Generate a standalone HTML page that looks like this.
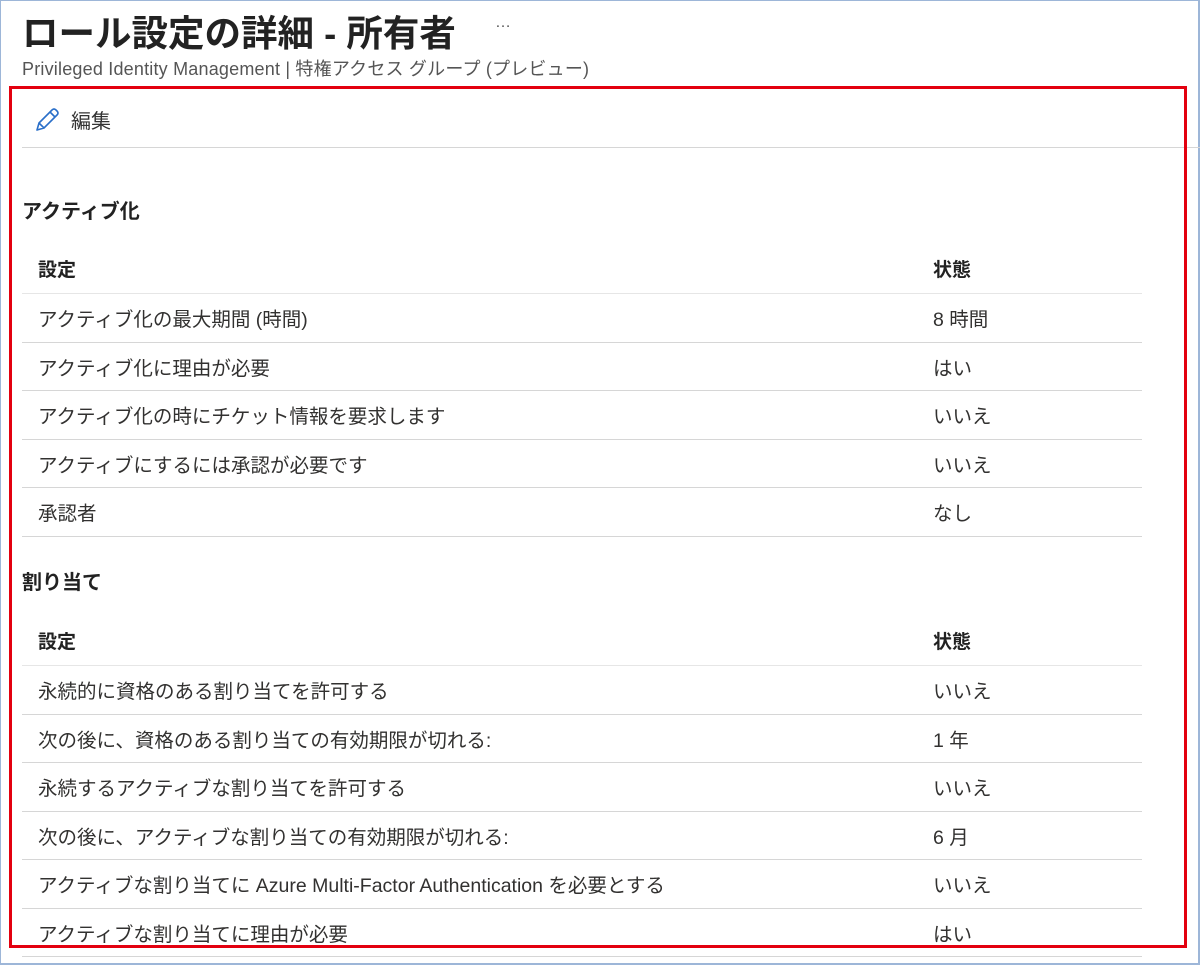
<!DOCTYPE html><html><head><meta charset="utf-8"><style>
body{margin:0;width:1200px;height:966px;background:#fff;font-family:"Liberation Sans","Noto Sans CJK JP",sans-serif;color:#323130;position:relative;overflow:hidden}
.frame{position:absolute;left:0;top:0;width:1197px;height:962px;border:1px solid #9db6d8;border-right-width:2px;border-bottom-width:2px}
.t{position:absolute;white-space:nowrap}
.line{position:absolute;height:1px;background:#d6d6d6}
.red{position:absolute;left:9px;top:86px;width:1172px;height:856px;border:3px solid #e3000f}
</style></head><body>
<div class="frame"></div>
<div class="t" style="left:22px;top:4px;font-size:36.5px;font-weight:bold;color:#222">ロール設定の詳細 - 所有者</div>
<div class="t" style="left:495px;top:14px;font-size:16px;color:#555">…</div>
<div class="t" style="left:22px;top:55px;font-size:18px;color:#555;letter-spacing:0.2px">Privileged Identity Management | 特権アクセス グループ (プレビュー)</div>
<svg class="t" style="left:33px;top:106px" width="28" height="28" viewBox="0 0 28 28"><path d="M4 24 L6 17 L19 4 Q21 2 23 4 L24 5 Q26 7 24 9 L11 22 Z M6 17 L11 22 M17 6 L22 11" fill="none" stroke="#2a6fc9" stroke-width="1.6" stroke-linejoin="round"/></svg>
<div class="t" style="left:71px;top:105px;font-size:20px;color:#333">編集</div>
<div class="line" style="left:22px;top:147px;width:1178px"></div>
<div class="red"></div>
<div id="c"></div>
<script>
const s1=[["アクティブ化の最大期間 (時間)","8 時間"],["アクティブ化に理由が必要","はい"],["アクティブ化の時にチケット情報を要求します","いいえ"],["アクティブにするには承認が必要です","いいえ"],["承認者","なし"]];
const s2=[["永続的に資格のある割り当てを許可する","いいえ"],["次の後に、資格のある割り当ての有効期限が切れる:","1 年"],["永続するアクティブな割り当てを許可する","いいえ"],["次の後に、アクティブな割り当ての有効期限が切れる:","6 月"],["アクティブな割り当てに Azure Multi-Factor Authentication を必要とする","いいえ"],["アクティブな割り当てに理由が必要","はい"]];
let h="";
function sec(title,ty,hy,rows){
h+=`<div class="t" style="left:22px;top:${ty-14}px;font-size:20px;font-weight:bold;color:#222">${title}</div>`;
h+=`<div class="t" style="left:38px;top:${hy-13}px;font-size:19px;font-weight:bold;color:#222">設定</div><div class="t" style="left:933px;top:${hy-13}px;font-size:19px;font-weight:bold;color:#222">状態</div>`;
let y=hy+25;h+=`<div class="line" style="left:22px;top:${y}px;width:1120px;background:#e6e6e6"></div>`;
rows.forEach(r=>{h+=`<div class="t" style="left:38px;top:${y+10}px;font-size:19.5px">${r[0]}</div><div class="t" style="left:933px;top:${y+10}px;font-size:19.5px">${r[1]}</div>`;y+=48.5;h+=`<div class="line" style="left:22px;top:${Math.round(y)}px;width:1120px"></div>`;});
}
sec("アクティブ化",209,268,s1);sec("割り当て",580,640,s2);
document.getElementById("c").innerHTML=h;
</script>
</body></html>
